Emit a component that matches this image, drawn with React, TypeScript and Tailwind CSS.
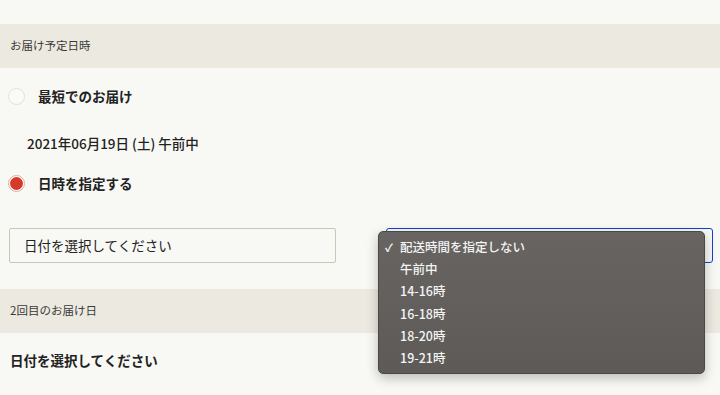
import React from "react";

const JP = "font-['Noto_Sans_CJK_JP','Noto_Sans',sans-serif]";

const TIME_OPTIONS = ["配送時間を指定しない", "午前中", "14-16時", "16-18時", "18-20時", "19-21時"];

const SectionHeader: React.FC<{ label: string }> = ({ label }) => (
  <div className="h-[44px] bg-[#ece9e0] px-[10px] flex items-center text-[11.5px] text-[#3a3a3a]">
    {label}
  </div>
);

const Radio: React.FC<{ checked?: boolean; label: string }> = ({ checked, label }) => (
  <label className="flex items-center h-full pl-[8px]">
    {checked ? (
      <span className="w-[17px] h-[17px] rounded-full border border-[#e9a89c] bg-white flex items-center justify-center">
        <span className="w-[13px] h-[13px] rounded-full bg-[#d53a28]" />
      </span>
    ) : (
      <span className="w-[17px] h-[17px] rounded-full border border-[#e2e2dc] bg-[#fafaf7]" />
    )}
    <span className="ml-[13px] text-[13.5px] font-bold text-[#222]">{label}</span>
  </label>
);

const TimeMenu: React.FC = () => (
  <div className="absolute left-[-8px] top-[3px] w-[327px] h-[143px] rounded-[5px] border border-[#4b4947] bg-gradient-to-b from-[#676462] to-[#5d5a57] shadow-[0_4px_12px_rgba(0,0,0,0.25)] pt-[4px]">
    {TIME_OPTIONS.map((opt, i) => (
      <div key={opt} className="h-[22.3px] flex items-center text-[12.5px] font-medium text-[#f4f4f4]">
        <span className="w-[21px] pl-[6px] text-[11px] font-bold">{i === 0 ? "✓" : ""}</span>
        {opt}
      </div>
    ))}
  </div>
);

export default function App() {
  return (
    <div className={`w-[720px] h-[395px] overflow-hidden bg-[#f8f8f4] pt-[24px] ${JP}`}>
      <SectionHeader label="お届け予定日時" />
      <div className="h-[56px]">
        <Radio label="最短でのお届け" />
      </div>
      <div className="h-[38px] flex items-center pl-[27px] text-[13.5px] font-medium text-[#222]">
        2021年06月19日 (土) 午前中
      </div>
      <div className="h-[42px]">
        <Radio checked label="日時を指定する" />
      </div>
      <div className="mt-[24px] flex pl-[9px] gap-[50px]">
        <div className="w-[327px] h-[35px] border border-[#c9c8b6] rounded-[2px] flex items-center pl-[14px] text-[13.5px] text-[#222]">
          日付を選択してください
        </div>
        <div className="relative w-[327px] h-[35px]">
          <div className="w-full h-full border-[1.5px] border-[#1241d0] rounded-[3px]" />
          <TimeMenu />
        </div>
      </div>
      <div className="mt-[26px]">
        <SectionHeader label="2回目のお届け日" />
      </div>
      <div className="h-[54px] flex items-center pl-[10px] text-[13.5px] font-bold text-[#222]">
        日付を選択してください
      </div>
    </div>
  );
}
